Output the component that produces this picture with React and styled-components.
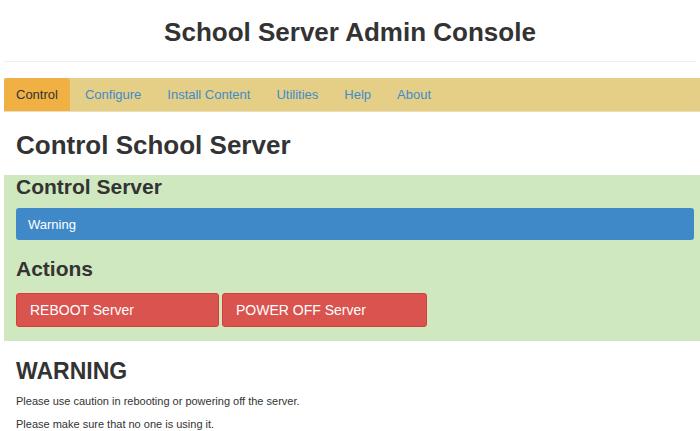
import React from 'react';
import styled, { createGlobalStyle } from 'styled-components';

const Global = createGlobalStyle`
  body {
    margin: 0;
    background: #fff;
    font-family: "Liberation Sans", Arial, sans-serif;
    color: #333;
  }
`;

const Header = styled.header`
  height: 61px;
  border-bottom: 1px solid #eee;
  margin: 0 4px;
  display: flex;
  align-items: center;
  justify-content: center;
`;

const Title = styled.h1`
  margin: 4px 0 0;
  font-size: 26px;
  font-weight: 700;
  color: #333;
`;

const Nav = styled.nav`
  margin: 16px 0 0 4px;
  height: 33px;
  background: #e5cf87;
  border-bottom: 1px solid #eadfb8;
  display: flex;
  align-items: stretch;
`;

const Tab = styled.a`
  display: flex;
  align-items: center;
  padding: 0 ${p => (p.active ? '12px' : '0')};
  margin-right: ${p => (p.active ? '15px' : '26px')};
  background: ${p => (p.active ? '#f0b043' : 'transparent')};
  border-radius: 4px 4px 0 0;
  color: ${p => (p.active ? '#333' : '#428bca')};
  font-size: 13px;
  text-decoration: none;
`;

const PageHeading = styled.h2`
  margin: 0;
  padding: 17px 16px 13px;
  font-size: 26px;
  font-weight: 700;
  line-height: 33px;
`;

const Section = styled.section`
  margin-left: 4px;
  background: #d0e8c0;
  padding: 0 6px 14px 12px;
`;

const SubHeading = styled.h3`
  margin: 0;
  font-size: 21px;
  font-weight: 700;
  line-height: 24px;
  padding: ${p => p.pad};
`;

const InfoBar = styled.div`
  height: 32px;
  border-radius: 3px;
  background: #3f89c9;
  color: #fff;
  font-size: 13px;
  display: flex;
  align-items: center;
  padding-left: 12px;
`;

const Buttons = styled.div`
  display: flex;
  gap: 3px;
`;

const DangerButton = styled.button`
  width: ${p => p.w}px;
  height: 34px;
  border: 1px solid #d43f3a;
  border-radius: 3px;
  background: #d9534f;
  color: #fff;
  font-family: inherit;
  font-size: 14px;
  text-align: left;
  padding: 0 13px;
`;

const Warning = styled.div`
  padding: 16px 16px 0;
`;

const WarnHeading = styled.h3`
  margin: 0 0 10px;
  font-size: 23px;
  font-weight: 700;
  line-height: 28px;
`;

const Para = styled.p`
  margin: 0 0 10px;
  font-size: 11px;
  line-height: 13px;
`;

export default function App() {
  const tabs = ['Control', 'Configure', 'Install Content', 'Utilities', 'Help', 'About'];
  return (
    <>
      <Global />
      <Header>
        <Title>School Server Admin Console</Title>
      </Header>
      <Nav>
        {tabs.map((t, i) => (
          <Tab key={t} active={i === 0}>{t}</Tab>
        ))}
      </Nav>
      <PageHeading>Control School Server</PageHeading>
      <Section>
        <SubHeading pad="0 0 9px">Control Server</SubHeading>
        <InfoBar>Warning</InfoBar>
        <SubHeading pad="17px 0 12px">Actions</SubHeading>
        <Buttons>
          <DangerButton w={203}>REBOOT Server</DangerButton>
          <DangerButton w={205}>POWER OFF Server</DangerButton>
        </Buttons>
      </Section>
      <Warning>
        <WarnHeading>WARNING</WarnHeading>
        <Para>Please use caution in rebooting or powering off the server.</Para>
        <Para>Please make sure that no one is using it.</Para>
      </Warning>
    </>
  );
}
